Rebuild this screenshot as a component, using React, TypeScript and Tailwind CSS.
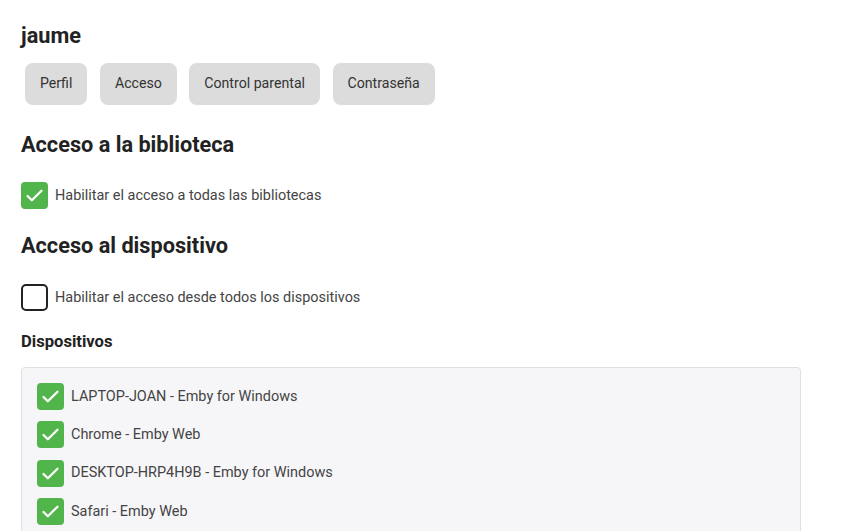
import React from "react";

function Check({ checked }: { checked: boolean }) {
  if (checked) {
    return (
      <div className="w-[27px] h-[27px] shrink-0 rounded-[4px] bg-[#52b54b] flex items-center justify-center">
        <svg width="21" height="21" viewBox="0 0 24 24" fill="none">
          <path d="M4 12.5l5 5L20 6.5" stroke="white" strokeWidth="2.6" strokeLinecap="round" strokeLinejoin="round" />
        </svg>
      </div>
    );
  }
  return <div className="w-[27px] h-[27px] shrink-0 rounded-[5px] border-2 border-[#222]" />;
}

export default function App() {
  const tabs = ["Perfil", "Acceso", "Control parental", "Contraseña"];
  const devices = [
    "LAPTOP-JOAN - Emby for Windows",
    "Chrome - Emby Web",
    "DESKTOP-HRP4H9B - Emby for Windows",
    "Safari - Emby Web",
  ];
  return (
    <div className="w-[852px] h-[531px] overflow-hidden bg-white text-[#222] pl-[21px] pt-[22px]" style={{ fontFamily: "Roboto, sans-serif" }}>
      <h1 className="text-[21.7px] leading-[28px] font-bold">jaume</h1>
      <div className="flex gap-[12.5px] mt-[13px] ml-[4px]">
        {tabs.map((t) => (
          <div key={t} className="h-[42px] px-[15px] rounded-[8px] bg-[#dcdcdc] flex items-center text-[14.15px] text-[#333]">
            {t}
          </div>
        ))}
      </div>
      <h2 className="text-[21.7px] leading-[28px] font-bold mt-[26px]">Acceso a la biblioteca</h2>
      <div className="flex items-center gap-[7px] mt-[23px]">
        <Check checked />
        <span className="text-[14.45px] text-[#444]">Habilitar el acceso a todas las bibliotecas</span>
      </div>
      <h2 className="text-[21.7px] leading-[28px] font-bold mt-[23px]">Acceso al dispositivo</h2>
      <div className="flex items-center gap-[7px] mt-[24px]">
        <Check checked={false} />
        <span className="text-[14.45px] text-[#444]">Habilitar el acceso desde todos los dispositivos</span>
      </div>
      <h3 className="text-[16.6px] leading-[20px] font-bold mt-[21px]">Dispositivos</h3>
      <div className="w-[780px] mt-[15px] bg-[#f6f6f8] border border-[#e0e0e0] rounded-[4px] pl-[15px] pt-[15px] pb-[10px] flex flex-col gap-[11.3px]">
        {devices.map((d) => (
          <div key={d} className="flex items-center gap-[7px]">
            <Check checked />
            <span className="text-[14.45px] text-[#444]">{d}</span>
          </div>
        ))}
      </div>
    </div>
  );
}
